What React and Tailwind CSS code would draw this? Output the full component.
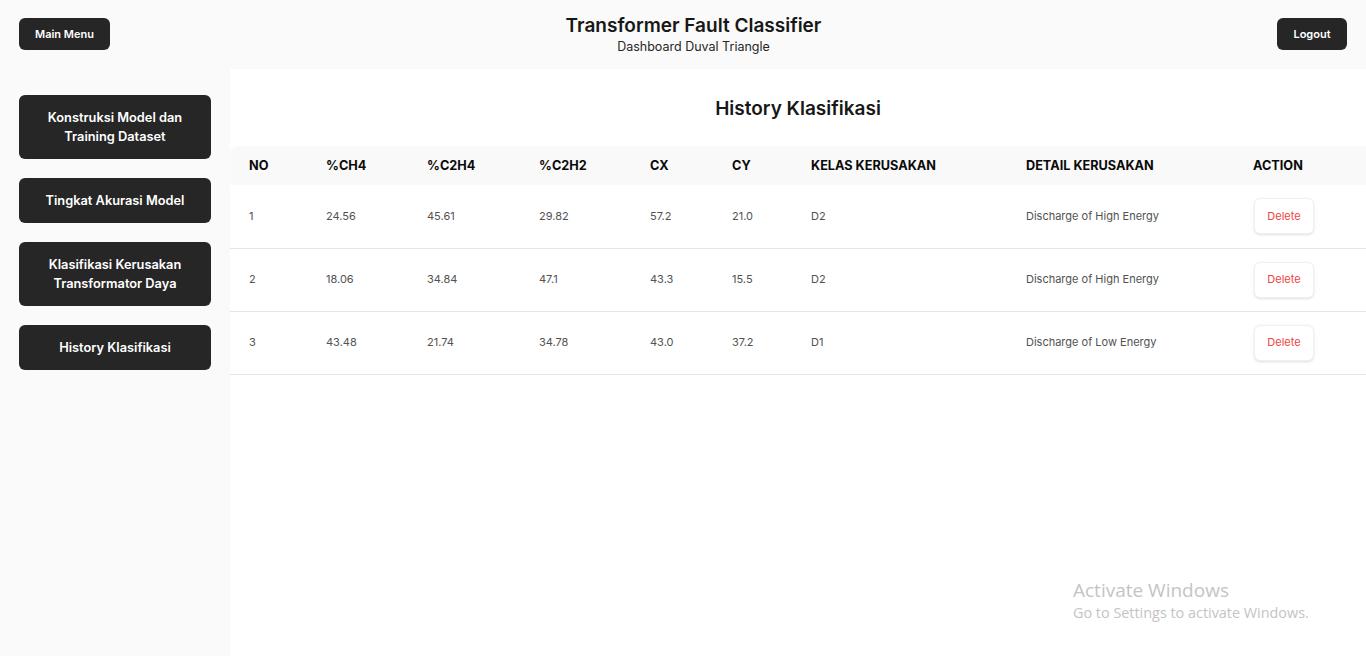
const rows = [
  { no: 1, ch4: '24.56', c2h4: '45.61', c2h2: '29.82', cx: '57.2', cy: '21.0', kelas: 'D2', detail: 'Discharge of High Energy' },
  { no: 2, ch4: '18.06', c2h4: '34.84', c2h2: '47.1', cx: '43.3', cy: '15.5', kelas: 'D2', detail: 'Discharge of High Energy' },
  { no: 3, ch4: '43.48', c2h4: '21.74', c2h2: '34.78', cx: '43.0', cy: '37.2', kelas: 'D1', detail: 'Discharge of Low Energy' },
]

const menu = [
  'Konstruksi Model dan Training Dataset',
  'Tingkat Akurasi Model',
  'Klasifikasi Kerusakan Transformator Daya',
  'History Klasifikasi',
]

export default function App() {
  return (
    <div className="h-[656px] flex flex-col bg-[#fafafa] text-[#171717] font-['Inter',sans-serif] overflow-hidden">
      <header className="h-[69px] shrink-0 flex items-start justify-between px-[19px] pt-[18px]">
        <button className="h-8 w-[91px] rounded-md bg-[#262626] text-white text-[11px] font-semibold">Main Menu</button>
        <div className="text-center -mt-[5px]">
          <h1 className="text-[19px] font-semibold leading-[26px] text-[#171717]">Transformer Fault Classifier</h1>
          <p className="text-[12.5px] leading-[16px] text-[#262626]">Dashboard Duval Triangle</p>
        </div>
        <button className="h-8 w-[70px] rounded-md bg-[#262626] text-white text-[11px] font-semibold">Logout</button>
      </header>

      <div className="flex flex-1 min-h-0">
        <aside className="w-[230px] shrink-0 px-[19px] pt-[26px] flex flex-col gap-[19px]">
          {menu.map((m) => (
            <button
              key={m}
              className="w-[192px] rounded-md bg-[#262626] text-white text-[12.8px] font-semibold leading-[19px] px-5 py-[13px] text-center"
            >
              {m}
            </button>
          ))}
        </aside>

        <main className="flex-1 bg-white relative">
          <h2 className="text-center text-[19px] font-semibold leading-[26px] pt-[27px] pb-[24px] text-[#171717]">History Klasifikasi</h2>
          <table className="w-full text-left border-collapse table-fixed">
            <colgroup>
              <col className="w-[77px]" />
              <col className="w-[101px]" />
              <col className="w-[112px]" />
              <col className="w-[111px]" />
              <col className="w-[82px]" />
              <col className="w-[79px]" />
              <col className="w-[215px]" />
              <col className="w-[227px]" />
              <col />
            </colgroup>
            <thead>
              <tr className="bg-[#f9f9f9] h-[39px] text-[12.7px] font-bold text-[#0a0a0a]">
                <th className="pl-[19px] rounded-tl-lg">NO</th>
                <th className="pl-[19px]">%CH4</th>
                <th className="pl-[19px]">%C2H4</th>
                <th className="pl-[19px]">%C2H2</th>
                <th className="pl-[19px]">CX</th>
                <th className="pl-[19px]">CY</th>
                <th className="pl-[19px]">KELAS KERUSAKAN</th>
                <th className="pl-[19px]">DETAIL KERUSAKAN</th>
                <th className="pl-[19px]">ACTION</th>
              </tr>
            </thead>
            <tbody className="text-[11px] text-[#525252]">
              {rows.map((r) => (
                <tr key={r.no} className="h-[63px] border-b border-[#e5e5e5]">
                  <td className="pl-[19px]">{r.no}</td>
                  <td className="pl-[19px]">{r.ch4}</td>
                  <td className="pl-[19px]">{r.c2h4}</td>
                  <td className="pl-[19px]">{r.c2h2}</td>
                  <td className="pl-[19px]">{r.cx}</td>
                  <td className="pl-[19px]">{r.cy}</td>
                  <td className="pl-[19px]">{r.kelas}</td>
                  <td className="pl-[19px]">{r.detail}</td>
                  <td className="pl-[20px]">
                    <button className="h-9 w-[60px] rounded-md border border-[#f0f0f0] bg-white shadow-sm text-[11px] text-[#ef4444]">Delete</button>
                  </td>
                </tr>
              ))}
            </tbody>
          </table>

          <div className="absolute left-[843px] top-[508px] text-[#c4c4c4] font-['Open_Sans',sans-serif] pointer-events-none">
            <p className="text-[19px] leading-[26px]">Activate Windows</p>
            <p className="text-[14.4px] leading-[20px]">Go to Settings to activate Windows.</p>
          </div>
        </main>
      </div>
    </div>
  )
}
